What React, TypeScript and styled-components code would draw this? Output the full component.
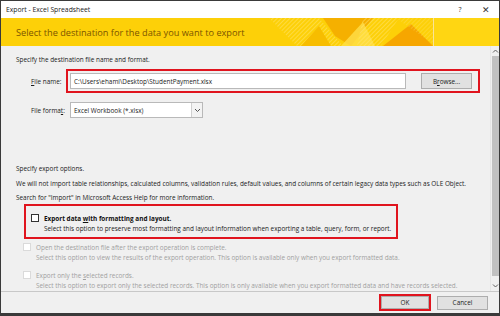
import React from "react";
import styled, { createGlobalStyle } from "styled-components";

const GlobalStyle = createGlobalStyle`
  html, body {
    margin: 0;
    padding: 0;
    background: #ffffff;
  }
  * {
    box-sizing: border-box;
  }
`;

const Window = styled.div`
  width: 500px;
  height: 316px;
  display: flex;
  flex-direction: column;
  border: 1px solid #3a3a3a;
  border-bottom-width: 3px;
  background: #f0f0f0;
  font-family: "Open Sans", "Noto Sans", sans-serif;
  font-size: 6.4px;
  color: #1a1a1a;
  overflow: hidden;
`;

const TitleBar = styled.div`
  height: 17px;
  flex: none;
  display: flex;
  align-items: center;
  padding-left: 5px;
  background: #ffffff;
  font-size: 6.8px;
  color: #222;
`;

const Title = styled.span`
  flex: 1;
`;

const TitleButton = styled.span<{ $size?: number }>`
  width: 26px;
  text-align: center;
  font-size: ${({ $size }) => $size ?? 7}px;
  color: #333;
`;

const Banner = styled.div`
  height: 28px;
  flex: none;
  position: relative;
  display: flex;
  align-items: center;
  padding-left: 15px;
  background: #fdd008;
  overflow: hidden;
`;

const BannerText = styled.span`
  position: relative;
  font-size: 9.2px;
  color: #7b5400;
  z-index: 1;
`;

const BannerArt = styled.svg`
  position: absolute;
  left: 0;
  top: 0;
`;

const Body = styled.div`
  flex: 1;
  display: flex;
  min-height: 0;
`;

const Content = styled.div`
  flex: 1;
  display: flex;
  flex-direction: column;
  padding: 9px 0 0 15px;
`;

const Line = styled.div<{ $gap?: number }>`
  height: 10px;
  line-height: 10px;
  margin-top: ${({ $gap }) => $gap ?? 0}px;
  white-space: nowrap;
`;

const FieldRow = styled.div<{ $gap: number }>`
  display: flex;
  align-items: center;
  margin-top: ${({ $gap }) => $gap}px;
  padding-left: 15px;
`;

const FieldLabel = styled.span`
  width: 35px;
  flex: none;
`;

const Highlight = styled.div`
  display: flex;
  align-items: center;
  gap: 15px;
  border: 2px solid #e0141e;
  padding: 2px 6px 2px 2px;
`;

const TextInput = styled.div`
  width: 336px;
  height: 16px;
  display: flex;
  align-items: center;
  padding-left: 3px;
  background: #ffffff;
  border: 1px solid #b9b9b9;
`;

const Button = styled.div<{ $width: number; $height?: number }>`
  width: ${({ $width }) => $width}px;
  height: ${({ $height }) => $height ?? 16}px;
  display: flex;
  align-items: center;
  justify-content: center;
  background: #e1e1e1;
  border: 1px solid #adadad;
`;

const Select = styled.div`
  width: 133px;
  height: 16px;
  margin-left: 4px;
  display: flex;
  align-items: center;
  background: #ffffff;
  border: 1px solid #b9b9b9;
`;

const SelectText = styled.span`
  flex: 1;
  padding-left: 3px;
`;

const SelectArrow = styled.span`
  width: 11px;
  height: 14px;
  display: flex;
  align-items: center;
  justify-content: center;
  border-left: 1px solid #d0d0d0;
  background: #f3f3f3;
`;

const OptionsBox = styled.div`
  width: 374px;
  margin: 1px 0 0 8px;
  padding: 7px 0 3px 5px;
  border: 2px solid #e0141e;
`;

const Option = styled.div<{ $gap?: number }>`
  display: flex;
  flex-direction: column;
  margin-top: ${({ $gap }) => $gap ?? 0}px;
`;

const OptionHead = styled.div`
  display: flex;
  align-items: center;
  gap: 5px;
  height: 10px;
`;

const Check = styled.span<{ $disabled?: boolean }>`
  width: 8px;
  height: 8px;
  flex: none;
  background: #ffffff;
  border: 1px solid ${({ $disabled }) => ($disabled ? "#dadada" : "#333333")};
`;

const OptionLabel = styled.span<{ $disabled?: boolean }>`
  font-weight: ${({ $disabled }) => ($disabled ? 400 : 700)};
  color: ${({ $disabled }) => ($disabled ? "#a0a0a0" : "#111")};
  white-space: nowrap;
`;

const OptionDesc = styled.div<{ $disabled?: boolean }>`
  height: 10px;
  line-height: 10px;
  margin-top: 1px;
  padding-left: 13px;
  color: ${({ $disabled }) => ($disabled ? "#a0a0a0" : "#1a1a1a")};
  white-space: nowrap;
`;

const Plain = styled.div`
  padding-left: 7px;
`;

const Scrollbar = styled.div`
  width: 9px;
  flex: none;
  display: flex;
  flex-direction: column;
  align-items: center;
  background: #f0f0f0;
  border-left: 1px solid #e6e6e6;
`;

const ScrollArrow = styled.svg`
  flex: none;
  margin: 3px 0;
`;

const Thumb = styled.div`
  width: 7px;
  flex: 1;
  margin: 0 0 5px;
  background: #c1c1c1;
`;

const Footer = styled.div`
  height: 22px;
  flex: none;
  display: flex;
  align-items: center;
  justify-content: flex-end;
  gap: 6px;
  padding-right: 11px;
  border-top: 1px solid #c8c8c8;
  background: #f0f0f0;
`;

const OkFrame = styled.div`
  border: 2px solid #e0141e;
`;

const Key = styled.u`
  text-decoration-thickness: 0.5px;
`;

export default function App() {
  return (
    <>
      <GlobalStyle />
      <Window>
        <TitleBar>
          <Title>Export - Excel Spreadsheet</Title>
          <TitleButton>?</TitleButton>
          <TitleButton $size={9}>✕</TitleButton>
        </TitleBar>
        <Banner>
          <BannerArt width="500" height="28" viewBox="0 0 500 28">
            <defs>
              <pattern id="hatch" width="3" height="3" patternUnits="userSpaceOnUse" patternTransform="rotate(45)">
                <line x1="0" y1="0" x2="0" y2="3" stroke="#ffe678" strokeWidth="1" />
              </pattern>
            </defs>
            <polygon points="268,0 318,0 342,28 296,28" fill="url(#hatch)" />
            <polygon points="300,28 318,8 330,28" fill="#f7bd00" />
            <polygon points="322,0 372,0 350,28 334,18" fill="#f5b000" />
            <polygon points="340,28 362,4 374,28" fill="#ffe04a" opacity="0.8" />
            <polygon points="362,0 398,0 380,28 356,28" fill="url(#hatch)" />
            <polygon points="382,28 410,6 432,28" fill="#f6a600" />
            <polygon points="395,0 432,0 432,26" fill="url(#hatch)" opacity="0.6" />
            <line x1="432.5" y1="0" x2="432.5" y2="28" stroke="#f8e39a" strokeWidth="1" />
            <rect x="433" y="0" width="67" height="28" fill="#ffd612" />
          </BannerArt>
          <BannerText>Select the destination for the data you want to export</BannerText>
        </Banner>
        <Body>
          <Content>
            <Line>Specify the destination file name and format.</Line>
            <FieldRow $gap={4}>
              <FieldLabel>
                <Key>F</Key>ile name:
              </FieldLabel>
              <Highlight>
                <TextInput>C:\Users\ehami\Desktop\StudentPayment.xlsx</TextInput>
                <Button $width={51}>
                  B<Key>r</Key>owse...
                </Button>
              </Highlight>
            </FieldRow>
            <FieldRow $gap={9}>
              <FieldLabel>
                File forma<Key>t</Key>:
              </FieldLabel>
              <Select>
                <SelectText>Excel Workbook (*.xlsx)</SelectText>
                <SelectArrow>
                  <svg width="7" height="5" viewBox="0 0 7 5">
                    <polyline points="1,1 3.5,3.5 6,1" fill="none" stroke="#555" strokeWidth="1" />
                  </svg>
                </SelectArrow>
              </Select>
            </FieldRow>
            <Line $gap={46}>Specify export options.</Line>
            <Line $gap={5}>
              We will not import table relationships, calculated columns, validation rules, default values, and
              columns of certain legacy data types such as OLE Object.
            </Line>
            <Line $gap={4}>Search for "Import" in Microsoft Access Help for more information.</Line>
            <OptionsBox>
              <Option>
                <OptionHead>
                  <Check />
                  <OptionLabel>
                    Export data <Key>w</Key>ith formatting and layout.
                  </OptionLabel>
                </OptionHead>
                <OptionDesc>
                  Select this option to preserve most formatting and layout information when exporting a table,
                  query, form, or report.
                </OptionDesc>
              </Option>
            </OptionsBox>
            <Plain>
              <Option $gap={3}>
                <OptionHead>
                  <Check $disabled />
                  <OptionLabel $disabled>Open the destination file after the export operation is complete.</OptionLabel>
                </OptionHead>
                <OptionDesc $disabled>
                  Select this option to view the results of the export operation. This option is available only when
                  you export formatted data.
                </OptionDesc>
              </Option>
              <Option $gap={7}>
                <OptionHead>
                  <Check $disabled />
                  <OptionLabel $disabled>
                    Export only the <Key>s</Key>elected records.
                  </OptionLabel>
                </OptionHead>
                <OptionDesc $disabled>
                  Select this option to export only the selected records. This option is only available when you
                  export formatted data and have records selected.
                </OptionDesc>
              </Option>
            </Plain>
          </Content>
          <Scrollbar>
            <ScrollArrow width="7" height="4" viewBox="0 0 7 4">
              <polyline points="1,3.5 3.5,1 6,3.5" fill="none" stroke="#606060" strokeWidth="1" />
            </ScrollArrow>
            <Thumb />
            <ScrollArrow width="7" height="4" viewBox="0 0 7 4">
              <polyline points="1,0.5 3.5,3 6,0.5" fill="none" stroke="#606060" strokeWidth="1" />
            </ScrollArrow>
          </Scrollbar>
        </Body>
        <Footer>
          <OkFrame>
            <Button $width={48} $height={13}>
              OK
            </Button>
          </OkFrame>
          <Button $width={51} $height={14}>
            Cancel
          </Button>
        </Footer>
      </Window>
    </>
  );
}
